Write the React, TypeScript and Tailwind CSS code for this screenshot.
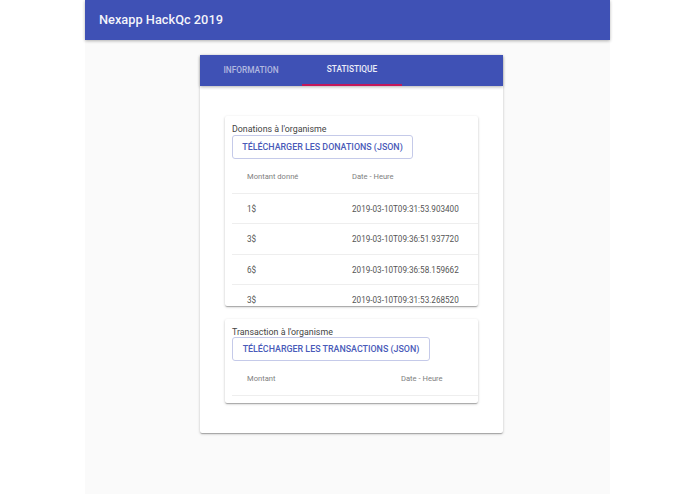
const donations = [
  { amount: '1$', date: '2019-03-10T09:31:53.903400' },
  { amount: '3$', date: '2019-03-10T09:36:51.937720' },
  { amount: '6$', date: '2019-03-10T09:36:58.159662' },
  { amount: '3$', date: '2019-03-10T09:31:53.268520' },
];

const cardClass =
  'rounded-[2px] bg-white shadow-[0_1px_3px_rgba(0,0,0,0.2),0_1px_1px_rgba(0,0,0,0.14),0_2px_1px_-1px_rgba(0,0,0,0.12)]';

const App = () => {
  return (
    <div className="h-[494px] w-[695px] overflow-hidden bg-white font-['Roboto',sans-serif]">
      <div className="ml-[85px] h-full w-[525px] bg-[#fafafa]">
        <header className="flex h-10 items-center bg-[#3f51b5] pl-[14px] shadow-[0_1px_3px_rgba(0,0,0,0.3)]">
          <h1 className="text-[12.8px] leading-none font-medium text-white/95">Nexapp HackQc 2019</h1>
        </header>

        <div className="flex justify-center pt-[15px] pl-2">
          <div className={`h-[378px] w-[303px] ${cardClass}`}>
            <div className="flex h-[31px] bg-[#3f51b5] shadow-[0_1px_3px_rgba(0,0,0,0.3)]">
              <div className="flex w-[102px] items-center justify-center pb-[1px] text-[8.3px] font-medium text-white/60">
                INFORMATION
              </div>
              <div className="flex w-[100px] items-center justify-center border-b-2 border-[#c2185b] text-[8.3px] font-medium text-white/90">
                STATISTIQUE
              </div>
            </div>

            <div className="flex flex-col gap-[13px] pt-[30px] pl-[25px]">
              <section className={`h-[190px] w-[253px] overflow-hidden pt-2 pl-[7px] ${cardClass}`}>
                <p className="text-[8.85px] leading-[11px] text-[#444]">Donations à l'organisme</p>
                <button className="block h-6 w-[181px] rounded-[3px] border border-[#c5cae9] pt-[2px] text-[8.9px] font-medium text-[#4a5bb9]">
                  TÉLÉCHARGER LES DONATIONS (JSON)
                </button>
                <div className="flex h-[35px] items-center border-b border-[#eeeeee] pt-[2px] pl-[15px] text-[7.6px] text-[#808080]">
                  <span className="w-[105px]">Montant donné</span>
                  <span>Date - Heure</span>
                </div>
                {donations.map((row, i) => (
                  <div
                    key={i}
                    className="flex h-[30.4px] items-center border-b border-[#eeeeee] pt-[1px] pl-[15px] text-[8.15px] text-[#555]"
                  >
                    <span className="w-[105px]">{row.amount}</span>
                    <span>{row.date}</span>
                  </div>
                ))}
              </section>

              <section className={`h-[84px] w-[253px] overflow-hidden pt-2 pl-[7px] ${cardClass}`}>
                <p className="text-[8.85px] leading-[10px] text-[#444]">Transaction à l'organisme</p>
                <button className="block h-6 w-[198px] rounded-[3px] border border-[#c5cae9] pt-[2px] text-[8.9px] font-medium text-[#4a5bb9]">
                  TÉLÉCHARGER LES TRANSACTIONS (JSON)
                </button>
                <div className="flex h-[35px] items-center border-b border-[#eeeeee] pt-[2px] pl-[15px] text-[7.6px] text-[#808080]">
                  <span className="w-[154px]">Montant</span>
                  <span>Date - Heure</span>
                </div>
              </section>
            </div>
          </div>
        </div>
      </div>
    </div>
  );
};

export default App;
